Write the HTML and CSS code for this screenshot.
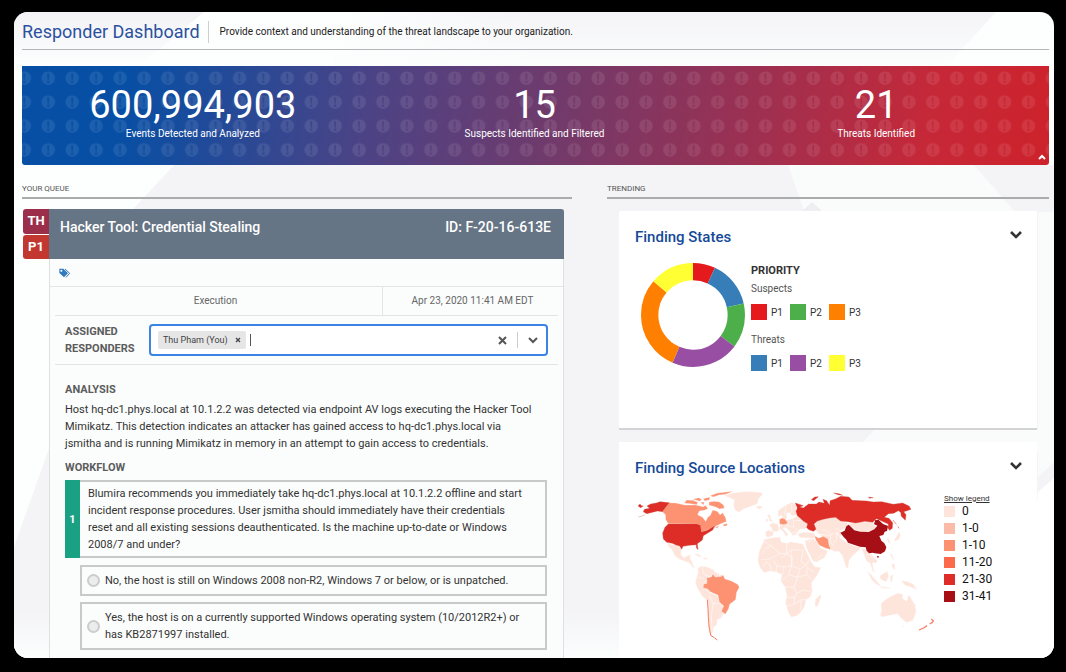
FILE: index.html
```html
<!DOCTYPE html>
<html lang="en">
<head>
<meta charset="utf-8">
<meta name="viewport" content="width=device-width, initial-scale=1">
<title>Responder Dashboard</title>
<link rel="stylesheet" href="styles.css">
</head>
<body>
<div class="window">
  <svg class="backdrop" viewBox="0 0 1040 646" preserveAspectRatio="none" aria-hidden="true">
    <defs>
      <linearGradient id="fade" x1="0" y1="0" x2="0" y2="1"><stop offset="0" stop-color="#f3f3f7"/><stop offset="1" stop-color="#fcfdfd"/></linearGradient>
      <linearGradient id="side" x1="0" y1="0" x2="1" y2="0"><stop offset="0" stop-color="#f4f4f7" stop-opacity="0"/><stop offset=".3" stop-color="#f4f4f7"/></linearGradient>
      <linearGradient id="down" x1="0" y1="0" x2="0" y2="1"><stop offset="0" stop-color="#fcfdfd" stop-opacity="0"/><stop offset="1" stop-color="#fcfdfd"/></linearGradient>
    </defs>
    <path d="M0 0H190L130 50H0Z" fill="url(#fade)"/>
    <path d="M320 0H982L932 54H320Z" fill="url(#side)"/>
    <path d="M320 0H982L932 54H320Z" fill="url(#down)"/>
    <path d="M160 153H1040V190L1024 440H1040V480L1010 646H0V535L120 196Z" fill="#f4f4f7"/>
    <path d="M774 153H960L1000 199H790ZM1024 200H1040V450L1024 465ZM860 418H1040V440H840Z" fill="#fafbfb"/>
    <path d="M788 199L798 190 808 199Z" fill="#efeff2"/>
    <path d="M0 600H1040V646H0Z" fill="url(#down)"/>
    <path d="M1024 480L1040 466V646H1010Z" fill="#fff"/>
  </svg>

  <header class="page-head">
    <h1 class="page-title">Responder Dashboard</h1>
    <p class="page-sub">Provide context and understanding of the threat landscape to your organization.</p>
  </header>

  <section class="banner" aria-label="Summary">
    <svg class="banner-pattern" viewBox="0 0 3081 294" preserveAspectRatio="xMinYMin slice" aria-hidden="true">
      <defs>
        <pattern id="alerts" x="-29" y="0" width="71" height="71" patternUnits="userSpaceOnUse">
          <path fill-rule="evenodd" d="M36 16a20 20 0 1 0 .1 0ZM33 22h6l-1 19h-4ZM33 44h6v6h-6Z" fill="#fff" fill-opacity=".09"/>
        </pattern>
      </defs>
      <rect width="3081" height="294" fill="url(#alerts)"/>
    </svg>
    <dl class="stats">
      <div class="stat"><dd class="stat-value">600,994,903</dd><dt class="stat-label">Events Detected and Analyzed</dt></div>
      <div class="stat"><dd class="stat-value">15</dd><dt class="stat-label">Suspects Identified and Filtered</dt></div>
      <div class="stat"><dd class="stat-value">21</dd><dt class="stat-label">Threats Identified</dt></div>
    </dl>
    <button class="icon-btn banner-toggle" type="button" aria-label="Collapse summary">
      <svg width="8" height="6" viewBox="0 0 8 6"><path d="M1 5L4 2 7 5" fill="none" stroke="#fff" stroke-width="2"/></svg>
    </button>
  </section>

  <main class="columns">
    <section class="column">
      <h2 class="section-label">Your Queue</h2>
      <div class="finding">
        <div class="badges"><span class="badge badge-th">TH</span><span class="badge badge-p1">P1</span></div>
        <article class="finding-card">
          <header class="finding-head"><h3 class="finding-title">Hacker Tool: Credential Stealing</h3><span class="finding-title">ID: F-20-16-613E</span></header>
          <div class="tag-row">
            <button class="icon-btn" type="button" aria-label="Tags">
              <svg width="12" height="10" viewBox="0 0 36 30"><path fill-rule="evenodd" d="M1 2H13L27 16 15 28 1 15ZM7 5a3 3 0 1 0 .1 0Z" fill="#3579bd"/><path d="M18 3L32 16 21 28" fill="none" stroke="#3579bd" stroke-width="3"/></svg>
            </button>
          </div>
          <div class="meta-row"><span class="meta-stage">Execution</span><time class="meta-time">Apr 23, 2020 11:41 AM EDT</time></div>
          <div class="assign-row">
            <label class="field-label" for="responders">Assigned Responders</label>
            <div class="picker">
              <span class="chip">Thu Pham (You)
                <button class="icon-btn" type="button" aria-label="Remove Thu Pham"><svg width="6" height="6" viewBox="0 0 6 6"><path d="M1 1L5 5M5 1L1 5" stroke="#444" stroke-width="1.3"/></svg></button>
              </span>
              <input class="picker-input" id="responders" type="text">
              <button class="icon-btn" type="button" aria-label="Clear all"><svg width="9" height="9" viewBox="0 0 9 9"><path d="M1 1L8 8M8 1L1 8" stroke="#555" stroke-width="2"/></svg></button>
              <span class="picker-rule"></span>
              <button class="icon-btn" type="button" aria-label="Show responders"><svg width="10" height="7" viewBox="0 0 10 7"><path d="M1 1L5 5 9 1" fill="none" stroke="#555" stroke-width="2"/></svg></button>
            </div>
          </div>
          <div class="finding-body">
            <h4 class="field-label">Analysis</h4>
            <p class="analysis">Host hq-dc1.phys.local at 10.1.2.2 was detected via endpoint AV logs executing the Hacker Tool Mimikatz. This detection indicates an attacker has gained access to hq-dc1.phys.local via jsmitha and is running Mimikatz in memory in an attempt to gain access to credentials.</p>
            <h4 class="field-label">Workflow</h4>
            <div class="step"><span class="step-no">1</span><p class="step-text">Blumira recommends you immediately take hq-dc1.phys.local at 10.1.2.2 offline and start incident response procedures. User jsmitha should immediately have their credentials reset and all existing sessions deauthenticated. Is the machine up-to-date or Windows 2008/7 and under?</p></div>
            <label class="option"><input class="radio" type="radio" name="answer"><span>No, the host is still on Windows 2008 non-R2, Windows 7 or below, or is unpatched.</span></label>
            <label class="option option-tall"><input class="radio" type="radio" name="answer"><span>Yes, the host is on a currently supported Windows operating system (10/2012R2+) or has KB2871997 installed.</span></label>
          </div>
        </article>
      </div>
    </section>

    <section class="column">
      <h2 class="section-label">Trending</h2>
      <div class="cards">
        <article class="card">
          <header class="card-head"><h3 class="card-title">Finding States</h3>
            <button class="icon-btn" type="button" aria-label="Collapse Finding States"><svg width="12" height="8" viewBox="0 0 12 8"><path d="M1 1L6 6 11 1" fill="none" stroke="#333" stroke-width="2.6"/></svg></button>
          </header>
          <div class="states">
            <svg class="donut" viewBox="0 0 318 318" role="img" aria-label="Findings by priority">
              <g fill="none" stroke-width="52" transform="rotate(-90 159 159)">
                <circle cx="159" cy="159" r="130" pathLength="360" stroke="#e41a1c" stroke-dasharray="25 335"/>
                <circle cx="159" cy="159" r="130" pathLength="360" stroke="#377eb8" stroke-dasharray="52 308" stroke-dashoffset="-25"/>
                <circle cx="159" cy="159" r="130" pathLength="360" stroke="#4daf4a" stroke-dasharray="50 310" stroke-dashoffset="-77"/>
                <circle cx="159" cy="159" r="130" pathLength="360" stroke="#984ea3" stroke-dasharray="76 284" stroke-dashoffset="-127"/>
                <circle cx="159" cy="159" r="130" pathLength="360" stroke="#ff7f00" stroke-dasharray="107 253" stroke-dashoffset="-203"/>
                <circle cx="159" cy="159" r="130" pathLength="360" stroke="#ffff33" stroke-dasharray="50 310" stroke-dashoffset="-310"/>
              </g>
            </svg>
            <div class="priority">
              <h4 class="priority-title">PRIORITY</h4>
              <p class="priority-group">Suspects</p>
              <ul class="keys"><li class="key"><i class="swatch red"></i>P1</li><li class="key"><i class="swatch green"></i>P2</li><li class="key"><i class="swatch orange"></i>P3</li></ul>
              <p class="priority-group">Threats</p>
              <ul class="keys"><li class="key"><i class="swatch blue"></i>P1</li><li class="key"><i class="swatch purple"></i>P2</li><li class="key"><i class="swatch yellow"></i>P3</li></ul>
            </div>
          </div>
        </article>

        <article class="card">
          <header class="card-head"><h3 class="card-title">Finding Source Locations</h3>
            <button class="icon-btn" type="button" aria-label="Collapse Finding Source Locations"><svg width="12" height="8" viewBox="0 0 12 8"><path d="M1 1L6 6 11 1" fill="none" stroke="#333" stroke-width="2.6"/></svg></button>
          </header>
          <div class="locations">
            <svg class="map" viewBox="45 0 900 510" role="img" aria-label="World map of finding sources">
              <g fill="#fee5dc" stroke="#fff" stroke-width="1.5" stroke-linejoin="round">
                <path d="M310 47L340 38 380 34 424 37 428 43 415 58 413 72 390 80 370 88 358 97 347 93 340 78 343 60 325 52Z"/>
                <path d="M408 81L414 77 426 78 427 83 417 88Z"/>
                <path d="M141 189L158 194 175 197 184 207 184 224 192 233 202 227 213 223 210 235 216 244 220 258 226 262 219 264 208 249 193 244 177 237 164 227 156 210 146 201Z"/>
                <path d="M221 219L236 222 246 230 240 232 227 225ZM249 232L262 234 264 239 251 238Z"/>
                <path d="M233 264L246 258 260 260 278 268 290 278 307 286 311 300 290 310 270 320 270 338 292 346 302 366 310 380 320 393 309 402 305 413 292 420 291 434 282 440 279 455 274 463 286 478 270 468 264 440 263 408 261 361 246 349 232 325 226 310 230 290 234 278Z"/>
                <path d="M433 178L455 173 480 170 484 185 500 190 512 185 548 191 560 215 572 242 585 260 604 262 592 285 575 308 577 335 572 350 558 360 555 378 544 396 530 408 513 412 506 400 496 372 500 345 494 321 482 302 485 284 470 277 450 274 432 278 419 262 413 242 417 215Z"/>
                <path d="M587 358L602 342 604 350 594 377 587 382 584 372Z"/>
                <path d="M436 155L445 150 462 155 459 167 446 172 437 170ZM447 135L458 128 474 132 478 145 474 155 458 155 453 142ZM448 124L446 114 440 104 449 102 454 118 460 126ZM438 118L444 115 445 124 437 126Z"/>
                <path d="M475 112L473 94 492 78 515 67 529 73 527 92 533 104 516 108 510 98 500 100 501 115 492 125 484 106Z"/>
                <path d="M479 137L492 133 500 120 520 115 533 106 543 118 561 126 564 140 553 148 540 147 530 162 519 168 508 153 500 145 489 145 505 163 499 170 487 152 477 148Z"/>
                <path d="M532 162L550 156 580 158 587 166 582 176 556 174 540 173Z"/>
                <path d="M555 180L579 175 590 185 603 204 624 213 615 232 590 247 578 243 566 218 558 202Z"/>
                <path d="M582 140L590 122 620 115 650 111 675 126 697 132 684 138 662 153 665 166 650 177 632 172 618 167 594 161Z"/>
                <path d="M595 165L632 165 652 158 662 175 675 184 704 198 725 200 715 213 700 225 688 240 684 267 678 262 667 227 656 214 644 215 631 207 622 178Z"/>
                <path d="M681 132L710 125 740 125 763 130 770 145 752 154 732 158 708 151Z"/>
                <path d="M724 204L742 208 758 228 773 242 768 250 758 248 760 263 765 279 758 274 750 250 739 243 731 222Z"/>
                <path d="M740 273L752 282 770 303 784 318 776 317 757 303ZM785 283L803 274 806 289 799 306 785 300 778 291ZM810 288L820 283 816 307 811 305ZM780 319L800 321 812 323 808 326 785 324ZM843 302L862 304 880 312 892 330 872 322 855 316Z"/>
                <path d="M782 371L794 361 806 352 820 345 833 339 849 343 848 355 860 363 866 342 875 358 886 375 889 396 879 422 860 428 846 418 832 402 811 406 787 411 780 407 784 390ZM846 437L853 436 850 442Z"/>
                <path d="M822 180L830 168 837 154 842 165 838 177 826 184ZM800 171L808 177 812 192 804 188ZM809 219L817 223 823 243 818 239ZM818 248L825 255 824 274 815 259Z"/>
              </g>
              <g fill="none" stroke="#fff" stroke-width="1.5">
                <path d="M431 184L455 198 478 220 500 221 513 210 550 210M455 198L440 204 425 221M478 220L455 235 440 238 423 239M500 190L500 221 517 232 515 258 492 260 470 257 460 240M513 210L515 258 540 267 560 255 566 240M550 210L543 245 560 255M430 260L438 246 450 254 454 274M470 257L468 276M492 260L487 284M515 258L506 284 487 302M540 267L532 292 506 284M532 292L560 284 577 300M560 284L562 262 584 278M494 321L522 322 530 340 550 330 571 335M522 322L532 292M500 352L524 352 530 340M524 352L520 374 498 378M520 374L542 360 558 358M542 360L543 394M500 221L485 235"/>
                <path d="M248 260L250 280 265 289 279 287M234 290L250 297M265 289L250 315 265 336M268 347L280 370 304 371M280 370L274 405 276 455M284 268L282 286M298 281L296 292M490 145L503 138 520 141 533 150M503 138L506 123M520 141L521 120 545 123M512 160L530 155M556 178L568 184 581 175M592 237L608 222M632 165L630 185 642 199M652 158L649 181 640 190M608 148L632 160M647 145L662 153M738 225L750 222 758 235M497 77L494 105M515 72L516 98"/>
              </g>
              <g fill="#fc9272" stroke="#fff" stroke-width="1">
                <path d="M148 68L168 69 195 75 228 75 250 80 257 76 264 86 253 91 238 93 233 104 248 112 257 124 263 112 271 106 278 90 292 94 300 104 308 98 317 113 319 125 306 130 287 139 278 145 267 148 244 156 240 135 231 132 145 131 137 119 136 104 127 95Z"/>
                <path d="M193 70L199 60 219 61 234 67 230 74 210 71ZM218 58L236 53 245 58 240 64ZM249 56L270 51 268 60 254 63ZM270 47L292 39 340 34 318 43 298 45 280 51ZM267 66L281 64 297 65 311 75 313 85 298 87 289 82 279 79 267 76ZM242 67L253 66 250 76ZM307 135L321 130 322 136 314 139ZM285 141L299 138 291 145Z"/>
                <path d="M260 293L274 291 279 282 286 291 305 289 309 284 315 297 333 302 353 313 358 322 350 337 347 359 329 373 326 386 316 403 304 394 311 378 298 366 294 346 272 336 263 327 249 323 251 312 261 310Z"/>
                <path d="M478 118L487 114 496 118 504 130 492 134 479 133Z"/>
                <path d="M583 167L596 174 610 169 624 176 627 194 633 209 615 204 598 196 588 181Z"/>
              </g>
              <g fill="none" stroke="#f98068" stroke-width="3">
                <path d="M262 359L264 385 265 410 267 438 272 466 283 473 292 480"/>
                <path d="M897 450L911 444 921 437M929 432L936 428 940 423 934 417" stroke-width="4"/>
              </g>
              <g fill="#de2d26" stroke="#c94b42" stroke-width="1">
                <path d="M148 68L127 95 113 93 92 98 80 101 70 95 73 88 89 85 81 78 92 72 109 69 120 65 135 67ZM54 78L60 72 64 77 70 78 62 83Z"/>
                <path d="M55 111L66 108 75 104" fill="none"/>
                <path d="M145 132L231 132 241 136 244 156 262 151 284 139 278 150 267 157 250 167 247 180 232 191 234 209 229 203 229 194 209 196 189 199 185 208 179 198 168 195 157 190 140 187 130 177 128 159 135 142Z"/>
                <path d="M526 69L550 77 539 81 550 84 566 72 589 72 597 66 613 70 609 58 620 62 629 76 630 62 648 56 662 49 687 51 696 61 740 63 760 66 785 65 820 73 848 69 867 78 873 88 861 92 851 95 858 104 856 121 844 109 842 97 835 92 821 100 805 101 793 112 807 115 818 128 817 145 809 151 804 145 805 132 785 123 769 116 758 127 735 124 707 129 684 125 662 123 647 112 628 114 610 118 592 123 582 132 588 148 580 154 567 149 560 143 563 131 551 124 541 115 532 107 528 94 532 84ZM574 59L584 51 595 50 581 62ZM641 39L657 41 668 46 654 44ZM745 51L760 53 749 55Z"/>
              </g>
              <path d="M819 120L829 133M833 139L837 145" stroke="#e86052" stroke-width="2"/>
              <path d="M661 158L674 152 679 139 686 134 694 142 703 151 721 155 746 156 763 148 772 137 762 132 766 120 776 120 789 132 804 138 801 153 794 155 790 165 778 168 784 182 793 190 799 202 795 214 782 222 765 220 758 218 747 220 740 212 737 202 720 200 706 196 684 188 679 179 671 171ZM770 229L777 228 774 235Z" fill="#a50f15"/>
            </svg>
            <div class="legend">
              <a class="legend-link" href="#legend">Show legend</a>
              <ul class="legend-list" id="legend">
                <li class="legend-item"><i class="legend-swatch lv0"></i>0</li>
                <li class="legend-item"><i class="legend-swatch lv1"></i>1-0</li>
                <li class="legend-item"><i class="legend-swatch lv2"></i>1-10</li>
                <li class="legend-item"><i class="legend-swatch lv3"></i>11-20</li>
                <li class="legend-item"><i class="legend-swatch lv4"></i>21-30</li>
                <li class="legend-item"><i class="legend-swatch lv5"></i>31-41</li>
              </ul>
            </div>
          </div>
        </article>
      </div>
    </section>
  </main>
</div>
</body>
</html>
```
FILE: styles.css
```css
* { box-sizing: border-box; }
h1, h2, h3, h4, p, ul, dl, dd { margin: 0; padding: 0; }
ul { list-style: none; }
body {
  margin: 0;
  height: 100vh;
  padding: 12px 12px 14px 14px;
  background: #000;
  font: 11px/17px Roboto, "Open Sans", sans-serif;
  color: #333;
}
.window {
  position: relative;
  height: 100%;
  padding: 0 5px 0 8px;
  overflow: hidden;
  border-radius: 14px;
  background: #fdfefe;
}
.backdrop { position: absolute; inset: 0; width: 100%; height: 100%; }
.page-head, .banner, .columns { position: relative; }
.icon-btn { display: flex; padding: 0; border: 0; background: none; cursor: pointer; }

.page-head {
  display: flex;
  align-items: center;
  height: 38px;
  padding-top: 2px;
  border-bottom: 1px solid #b4b5b8;
}
.page-title {
  padding-right: 8px;
  border-right: 1px solid #cfd0d3;
  font-size: 18px;
  line-height: 22px;
  font-weight: 400;
  color: #2b519f;
}
.page-sub { padding-left: 11px; font-size: 10px; color: #222; }

.banner {
  margin-top: 16px;
  height: 99px;
  overflow: hidden;
  border-radius: 0 0 3px 3px;
  background: linear-gradient(100deg, #064fa5 10%, #4c4385 34%, #713a6b 52%, #983154 69%, #c62838 88%, #cd222b);
  color: #fff;
}
.banner-pattern { position: absolute; inset: 0; width: 100%; height: 100%; }
.stats { position: relative; display: grid; grid-template-columns: repeat(3, 1fr); margin: 0; padding: 19px 2px 0 0; }
.stat { text-align: center; }
.stat-value { font-size: 38px; line-height: 41px; font-weight: 400; }
.stat-label { font-size: 10px; line-height: 16px; }
.banner-toggle { position: absolute; right: 3px; bottom: 5px; }

.columns { display: grid; grid-template-columns: 550fr 442fr; gap: 35px; margin-top: 18px; }
.section-label {
  height: 16px;
  border-bottom: 2px solid #aaabad;
  font-size: 8px;
  line-height: 12px;
  font-weight: 400;
  text-transform: uppercase;
  color: #555;
}

.finding { display: flex; align-items: flex-start; margin: 10px 8px 0 1px; }
.badges { display: grid; gap: 1px; width: 26px; }
.badge { height: 25px; border-radius: 3px 0 0 3px; font-size: 13px; line-height: 24px; font-weight: 700; text-align: center; color: #fff; }
.badge-th { background: #9b2e4a; }
.badge-p1 { height: 24px; background: #c2372f; }
.finding-card { flex: 1; border: solid #dfe0e2; border-width: 0 1px; background: #fbfdfc; }
.finding-head {
  display: flex;
  justify-content: space-between;
  height: 50px;
  margin: 0 -1px;
  padding: 9px 13px 0 11px;
  border-radius: 0 3px 0 0;
  background: #667585;
}
.finding-title { font-size: 14px; line-height: 18px; font-weight: 500; color: #fff; }
.tag-row { display: flex; align-items: center; height: 28px; padding-left: 9px; border-bottom: 1px solid #e3e4e5; }
.meta-row { display: flex; height: 29px; margin: 0 5px; border-bottom: 1px solid #e3e4e5; font-size: 10px; line-height: 28px; text-align: center; color: #666; }
.meta-stage { flex: 1; padding-right: 6px; }
.meta-time { width: 176px; padding-left: 4px; border-left: 1px solid #e3e4e5; }
.assign-row { display: flex; align-items: center; height: 49px; margin: 0 5px; padding: 0 10px; border-bottom: 1px solid #e3e4e5; }
.field-label { font-size: 11px; line-height: 17px; font-weight: 700; text-transform: uppercase; color: #5c5c5c; }
.assign-row .field-label { width: 84px; }
.picker {
  display: flex;
  flex: 1;
  align-items: center;
  gap: 10px;
  min-width: 0;
  height: 32px;
  padding: 0 8px 0 7px;
  border: 2px solid #3a85e4;
  border-radius: 4px;
  background: #fff;
}
.chip { display: flex; align-items: center; gap: 7px; padding: 0 5px; border-radius: 2px; background: #e6e6e6; font-size: 9px; line-height: 18px; color: #444; }
.picker-input { flex: 1; min-width: 0; height: 12px; margin-left: -6px; padding: 0; border: 0; border-left: 1px solid #555; outline: 0; background: none; font: inherit; }
.picker-rule { width: 1px; height: 16px; background: #ccc; }
.finding-body { padding: 16px 16px 9px 15px; }
.analysis { margin: 3px 0 7px; padding-right: 12px; }
.step { display: flex; margin-top: 4px; }
.step-no { display: flex; align-items: center; justify-content: center; width: 15px; background: #1aa083; font-weight: 700; color: #fff; }
.step-text { flex: 1; padding: 3px 14px 3px 8px; border: 2px solid #c9c9c9; border-left: 0; }
.option { display: flex; align-items: center; gap: 5px; height: 31px; margin: 7px 0 0 15px; padding: 0 14px 0 5px; border: 2px solid #c9c9c9; }
.option-tall { height: 48px; margin-top: 6px; }
.radio { flex: none; appearance: none; width: 13px; height: 13px; margin: 0; border: 2px solid #ccc; border-radius: 50%; background: #ececec; }

.cards { display: grid; gap: 12px; margin: 12px 12px 0 12px; }
.card { height: 219px; padding: 16px 15px 0 16px; border-bottom: 2px solid #d3d3d5; background: #fff; }
.card-head { display: flex; justify-content: space-between; }
.card-head .icon-btn { margin-top: 4px; align-self: flex-start; }
.card-title { font-size: 15px; line-height: 20px; font-weight: 500; color: #154a98; }
.states { display: flex; gap: 5px; padding: 15px 0 0 5px; }
.donut { width: 106px; height: 106px; }
.priority-title { font-size: 11px; line-height: 17px; font-weight: 700; }
.priority-group { font-size: 10px; line-height: 20px; color: #555; }
.keys { display: flex; gap: 7px; height: 31px; padding-top: 5px; }
.key { display: flex; gap: 4px; font-size: 10px; line-height: 17px; }
.swatch { width: 16px; height: 16px; }
.red { background: #e41a1c; }
.green { background: #4daf4a; }
.orange { background: #ff7f00; }
.blue { background: #377eb8; }
.purple { background: #984ea3; }
.yellow { background: #ffff33; }
.locations { display: flex; gap: 9px; padding-top: 2px; }
.map { flex: none; width: 300px; height: 170px; }
.legend { padding-top: 14px; color: #111; }
.legend-link { display: block; font-size: 8px; line-height: 10px; color: #333; }
.legend-item { display: flex; align-items: center; gap: 7px; font-size: 12px; line-height: 17px; }
.legend-list { margin-top: -1px; }
.legend-swatch { width: 11px; height: 11px; }
.lv0 { background: #fee5dc; }
.lv1 { background: #fcbba8; }
.lv2 { background: #fc9272; }
.lv3 { background: #fb6a4a; }
.lv4 { background: #de2d26; }
.lv5 { background: #a50f15; }
```
